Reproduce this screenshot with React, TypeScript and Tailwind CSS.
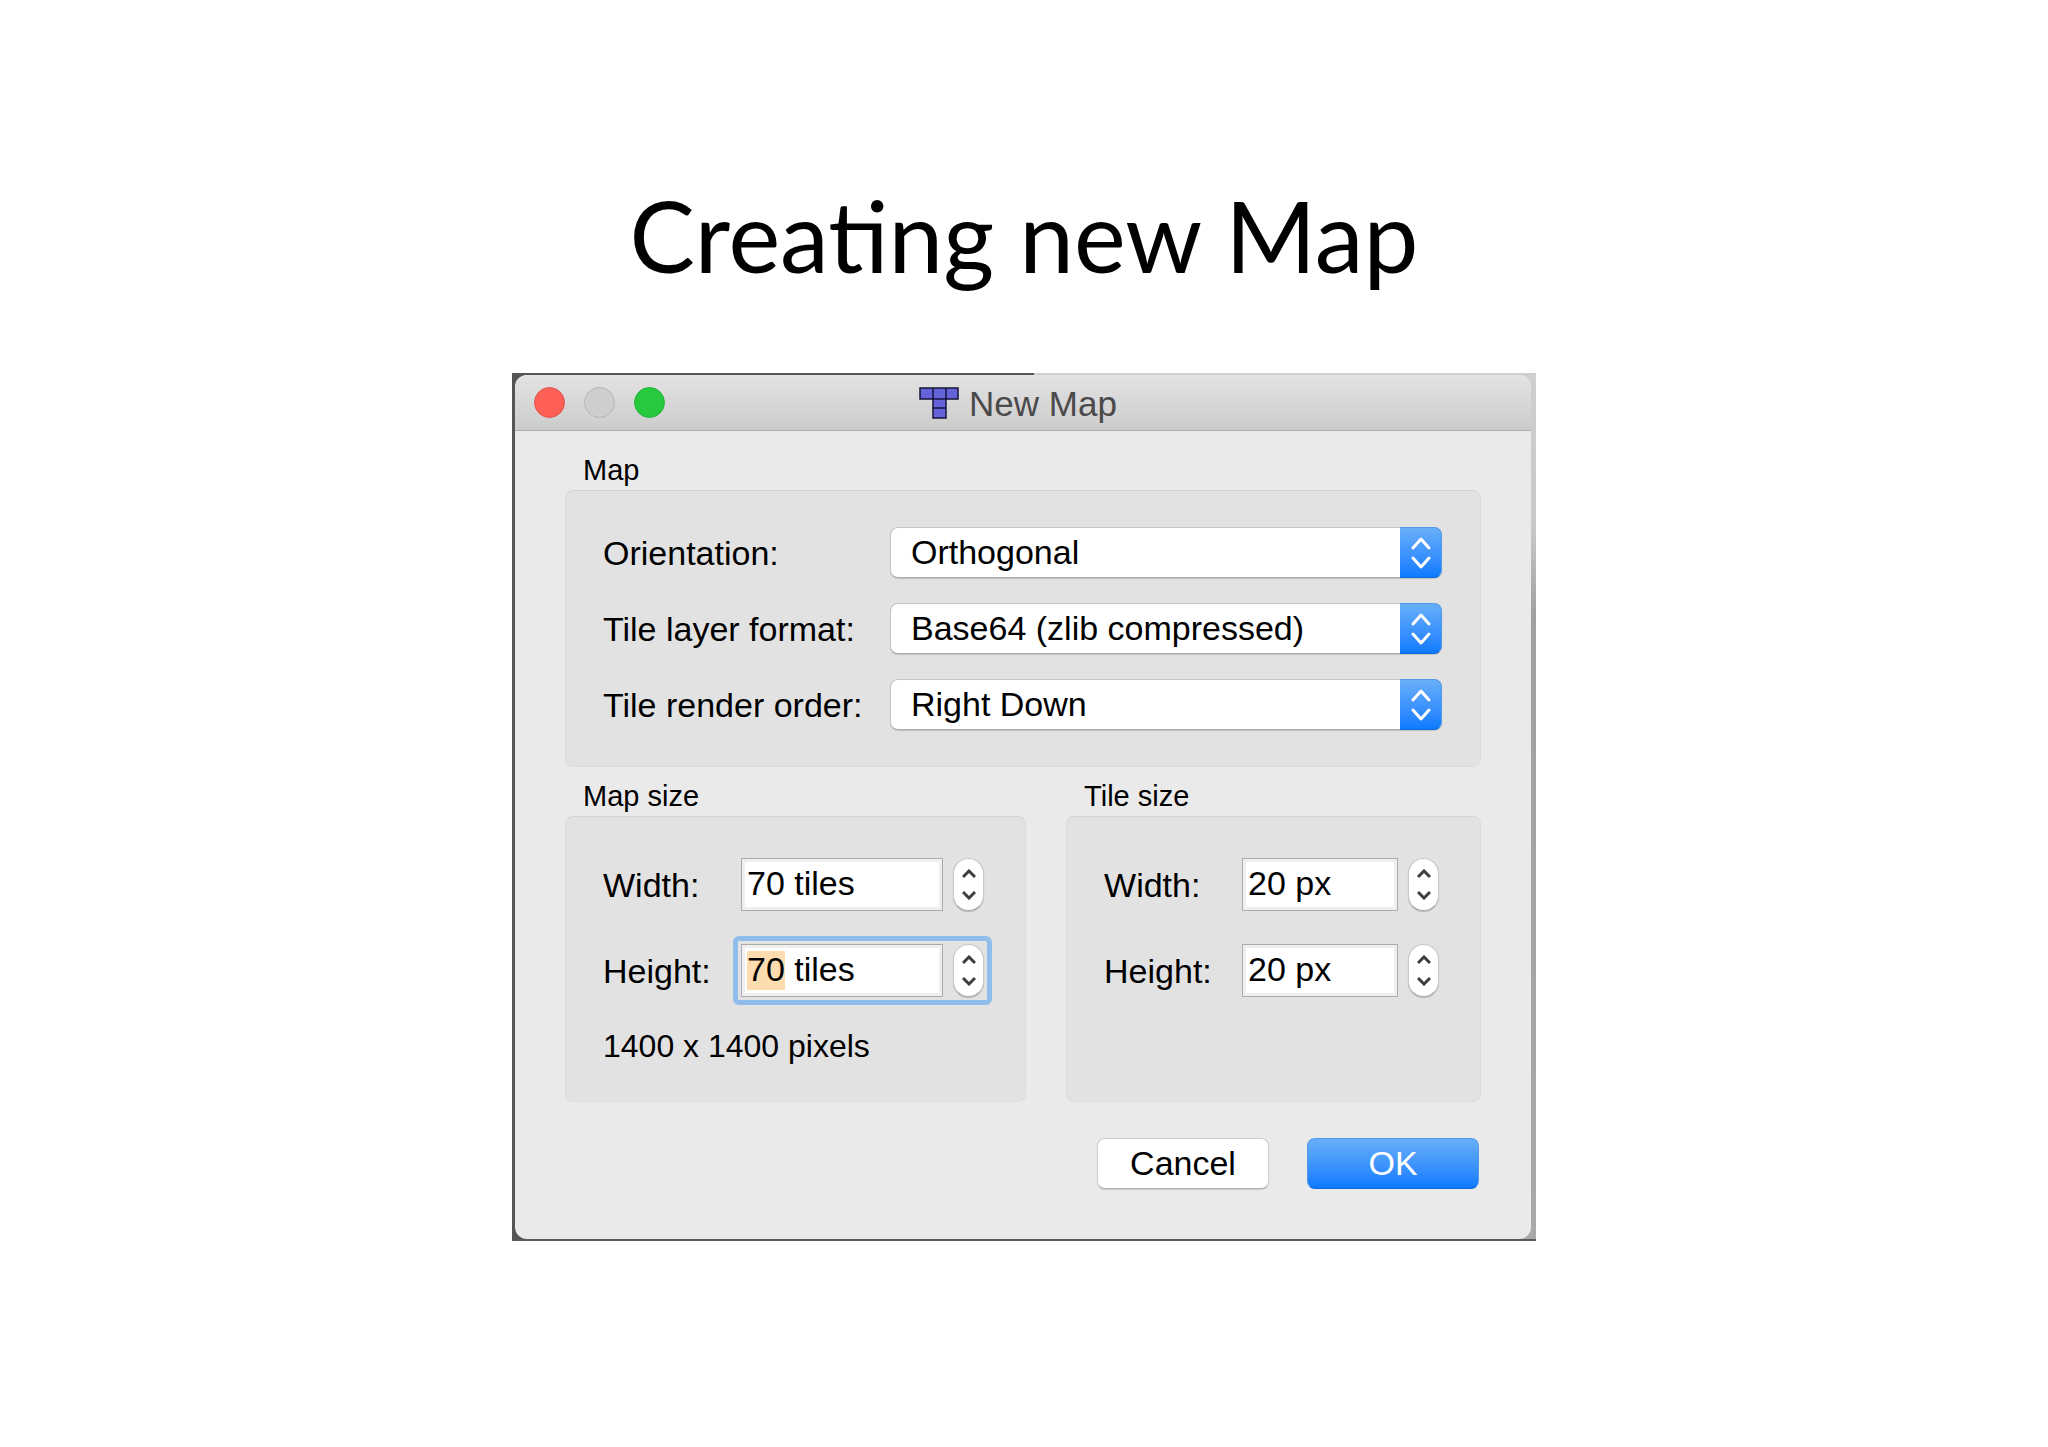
import { useState } from "react";
import type { ReactNode } from "react";

const mapOptions = [
  { id: "orientation", label: "Orientation:", options: ["Orthogonal", "Isometric", "Isometric (Staggered)"] },
  { id: "format", label: "Tile layer format:", options: ["Base64 (zlib compressed)", "Base64 (uncompressed)", "CSV", "XML"] },
  { id: "order", label: "Tile render order:", options: ["Right Down", "Right Up", "Left Down", "Left Up"] },
];

function TiledLogo() {
  return (
    <svg className="w-10 h-8 shrink-0" viewBox="0 0 40 32" fill="#6463d8" stroke="#14143a" strokeWidth="1.5" aria-hidden="true">
      <path d="M1 1h38v11H27v19H14V12H1z" />
      <path d="M14 1v11h13V1M14 21h13" fill="none" />
    </svg>
  );
}

function GroupBox({ title, className, children }: { title: string; className: string; children: ReactNode }) {
  return (
    <section className="flex flex-col">
      <h2 className="pl-[18px] mb-0.5 text-[29px] leading-9">{title}</h2>
      <div className={`flex-1 rounded-lg border border-[#dddcdd] border-t-[#d4d3d4] bg-[#e3e2e3] ${className}`}>{children}</div>
    </section>
  );
}

function SelectRow({ id, label, options }: { id: string; label: string; options: string[] }) {
  return (
    <div className="flex items-center">
      <label htmlFor={id} className="w-[287px] shrink-0 pt-px">{label}</label>
      <div className="relative flex-1 h-[51px]">
        <select
          id={id}
          className="w-full h-full appearance-none rounded-lg border border-[#c6c5c6] border-b-[#adacad] bg-white pl-5 pr-12 pb-0.5 outline-none shadow-[0_1px_1px_rgba(0,0,0,0.15)]"
        >
          {options.map((option) => (
            <option key={option}>{option}</option>
          ))}
        </select>
        <span className="absolute inset-y-0 right-0 w-[42px] rounded-r-lg border border-l-0 border-[#4f9bea] border-b-[#0a6ae0] bg-linear-to-b from-[#66aef8] to-[#0a7aff] flex items-center justify-center pointer-events-none">
          <svg className="w-5 h-8" viewBox="0 0 20 32" fill="none" stroke="#fff" strokeWidth="3" strokeLinecap="round" strokeLinejoin="round" aria-hidden="true">
            <path d="M2 11l8-9 8 9M2 21l8 9 8-9" />
          </svg>
        </span>
      </div>
    </div>
  );
}

type SpinRowProps = { id: string; label: string; value: number; unit: string; focused?: boolean; onChange: (value: number) => void };

function SpinRow({ id, label, value, unit, focused = false, onChange }: SpinRowProps) {
  return (
    <div className="flex items-center">
      <label htmlFor={id} className="w-[130px] shrink-0">{label}</label>
      <div
        className={`flex flex-1 -my-2 border-[5px] rounded-md p-[3px] gap-2.5 ${
          focused ? "border-[#90bde9]" : "border-transparent"
        }`}
      >
        <input
          id={id}
          value={`${value} ${unit}`}
          onChange={(e) => onChange(parseInt(e.target.value) || 0)}
          className={`flex-1 w-0 min-w-0 h-[53px] border border-[#acabac] px-[5px] pb-0.5 outline-none shadow-[inset_0_0_0_3px_#f0eff0] ${
            focused
              ? "bg-white bg-[linear-gradient(#fddcaf,#fddcaf)] bg-no-repeat bg-size-[38px_39px] bg-position-[5px_6px]"
              : "bg-white"
          }`}
        />
        <div className="flex flex-col w-[31px] h-[53px] rounded-full border border-[#c9c8c9] border-b-[#b0afb0] bg-white shadow-[0_1px_1px_rgba(0,0,0,0.2)]">
          <button type="button" aria-label={`Increase ${id}`} onClick={() => onChange(value + 1)} className="flex-1 flex items-center justify-center pt-1">
            <svg className="w-3.5 h-2.5" viewBox="0 0 14 10" fill="none" stroke="#3f3e3f" strokeWidth="3" aria-hidden="true">
              <path d="M1 8l6-6 6 6" />
            </svg>
          </button>
          <button type="button" aria-label={`Decrease ${id}`} onClick={() => onChange(value - 1)} className="flex-1 flex items-center justify-center pb-1">
            <svg className="w-3.5 h-2.5" viewBox="0 0 14 10" fill="none" stroke="#3f3e3f" strokeWidth="3" aria-hidden="true">
              <path d="M1 2l6 6 6-6" />
            </svg>
          </button>
        </div>
      </div>
    </div>
  );
}

export default function App() {
  const [mapWidth, setMapWidth] = useState(70);
  const [mapHeight, setMapHeight] = useState(70);
  const [tileWidth, setTileWidth] = useState(20);
  const [tileHeight, setTileHeight] = useState(20);

  return (
    <main className="min-h-screen bg-white pt-[175px] text-black font-['Liberation_Sans',Arial,sans-serif]">
      <h1 className="text-center text-[98px] leading-[120px] font-['Lato',sans-serif]">Creating new Map</h1>

      {/* Strip of desktop that shows around the dialog */}
      <div className="w-full max-w-[1024px] mx-auto mt-[78px] pl-[3px] pr-[5px] pt-0.5 border-b-2 border-[#5a595b] bg-[linear-gradient(to_right,#555456_51%,transparent_51%),linear-gradient(to_bottom,#d0cfd0,#c9c8c9_18%,#a09fa1_28%,#a9a8aa)]">
        <div className="rounded-xl bg-[#ebeaeb] text-[34px] leading-10">
          {/* Title bar */}
          <header className="grid grid-cols-[1fr_auto_1fr] items-center h-14 px-[19px] rounded-t-xl border-b border-[#adacad] bg-linear-to-b from-[#e4e3e4] to-[#cdcccd]">
            <div className="flex gap-[19px]">
              <button type="button" aria-label="Close" className="size-[31px] rounded-full border border-[#e2554f] bg-[#fe5f57]" />
              <button type="button" aria-label="Minimize" className="size-[31px] rounded-full border border-[#b7b6b7] bg-[#cfcecf]" />
              <button type="button" aria-label="Zoom" className="size-[31px] rounded-full border border-[#24b43a] bg-[#27c93f]" />
            </div>
            <div className="flex items-center gap-2.5 pr-2.5 text-[#4b4a4b]">
              <TiledLogo />
              <span className="pt-0.5 text-[35px]">New Map</span>
            </div>
          </header>

          <form className="px-[50px] pt-[21px] pb-[50px]" onSubmit={(e) => e.preventDefault()}>
            <GroupBox title="Map" className="flex flex-col gap-[25px] pl-[37px] pr-[38px] py-9">
              {mapOptions.map((row) => (
                <SelectRow key={row.id} {...row} />
              ))}
            </GroupBox>

            <div className="grid grid-cols-[460fr_414fr] gap-10 mt-[11px]">
              <GroupBox title="Map size" className="flex flex-col gap-[33px] pl-[37px] pr-[33px] pt-[41px] pb-[35px]">
                <SpinRow id="map-width" label="Width:" value={mapWidth} unit="tiles" onChange={setMapWidth} />
                <SpinRow id="map-height" label="Height:" value={mapHeight} unit="tiles" focused onChange={setMapHeight} />
                <p className="-mt-1 text-[32px]">
                  {mapWidth * tileWidth} x {mapHeight * tileHeight} pixels
                </p>
              </GroupBox>
              <GroupBox title="Tile size" className="flex flex-col gap-[33px] pl-[37px] pr-[33px] pt-[41px] pb-[35px]">
                <SpinRow id="tile-width" label="Width:" value={tileWidth} unit="px" onChange={setTileWidth} />
                <SpinRow id="tile-height" label="Height:" value={tileHeight} unit="px" onChange={setTileHeight} />
              </GroupBox>
            </div>

            <div className="flex justify-end gap-[38px] mt-9 pr-0.5">
              <button type="button" className="w-[172px] h-[51px] rounded-lg border border-[#cfcecf] border-b-[#b5b4b5] bg-white pb-0.5 shadow-[0_1px_1px_rgba(0,0,0,0.15)]">
                Cancel
              </button>
              <button type="submit" className="w-[172px] h-[51px] rounded-lg border border-[#4f9bea] border-b-[#0a6ae0] bg-linear-to-b from-[#66aef8] to-[#0a7aff] pb-0.5 text-white">
                OK
              </button>
            </div>
          </form>
        </div>
      </div>
    </main>
  );
}
